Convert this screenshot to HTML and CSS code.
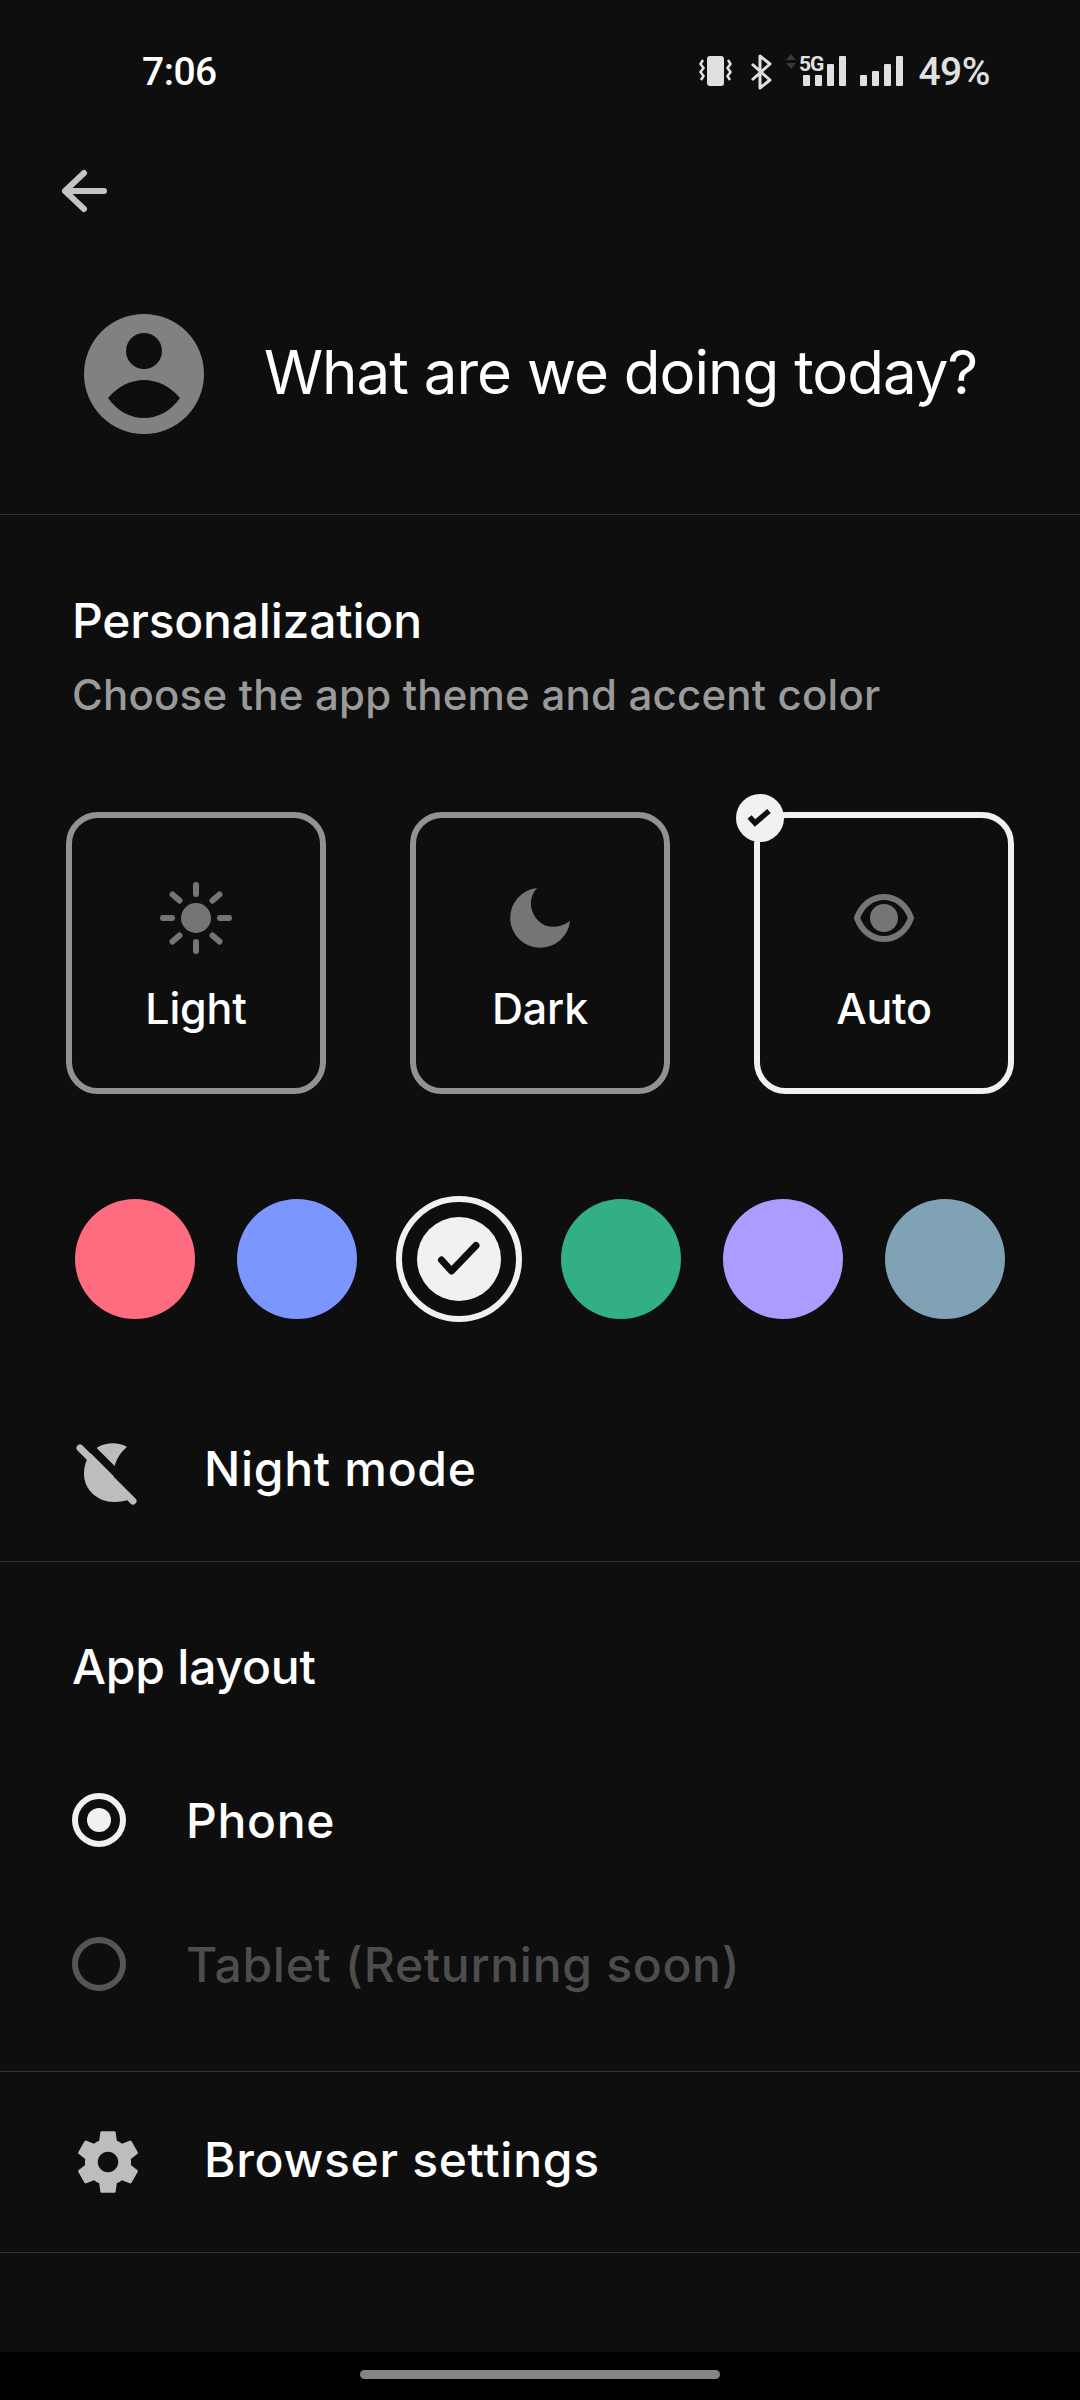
FILE: index.html
```html
<!DOCTYPE html>
<html lang="en">
<head>
  <meta charset="UTF-8">
  <title>Personalization</title>
  <link rel="stylesheet" href="styles.css">
</head>
<body>

<div class="screen">
  <div class="status">
    <span class="time">7:06</span>
    <div class="status-right">
      <svg class="status-icons" width="206" height="44" viewBox="700 50 206 44">
        <rect x="708" y="56" width="17" height="30" rx="3" fill="#e0e0e0"/>
        <path d="M704 60l-2.500 4 3 4-3 4 3 4-2.500 4M729 60l2.500 4-3 4 3 4-3 4 2.500 4" fill="none" stroke="#e0e0e0" stroke-width="2.500"/>
        <path d="M753 64L771 80 761 88V56L771 64 753 80" fill="none" stroke="#e0e0e0" stroke-width="3" stroke-linejoin="round"/>
        <path d="M792 54l5 6h-10zM792 69l5-6h-10z" fill="#3a3a3a"/>
        <rect x="804" y="75" width="7" height="11" rx="1" fill="#e0e0e0"/>
        <rect x="816" y="75" width="7" height="11" rx="1" fill="#e0e0e0"/>
        <rect x="828" y="64" width="7" height="22" rx="1" fill="#e0e0e0"/>
        <rect x="840" y="56" width="7" height="30" rx="1" fill="#e0e0e0"/>
        <rect x="861" y="75" width="7" height="11" rx="1" fill="#e0e0e0"/>
        <rect x="873" y="71" width="7" height="15" rx="1" fill="#e0e0e0"/>
        <rect x="885" y="64" width="7" height="22" rx="1" fill="#e0e0e0"/>
        <rect x="897" y="56" width="7" height="30" rx="1" fill="#e0e0e0"/>
        <text class="net" x="800" y="71">5G</text>
      </svg>
      <span class="battery">49%</span>
    </div>
  </div>

  <div class="back-row">
    <svg width="50" height="50" viewBox="0 0 50 50">
      <path d="M44 25H5M24 7L5 25l19 18" fill="none" stroke="#c4c4c4" stroke-width="6" stroke-linecap="round" stroke-linejoin="round"/>
    </svg>
  </div>

  <div class="header">
    <svg width="120" height="120" viewBox="0 0 120 120">
      <circle cx="60" cy="60" r="60" fill="#808282"/>
      <circle cx="60" cy="37" r="18" fill="#0e0e0e"/>
      <path d="M24 84C34 72 47 66 60 66s26 6 36 18c-9 13-22 20-36 20S33 97 24 84z" fill="#0e0e0e"/>
    </svg>
    <h1>What are we doing today?</h1>
  </div>

  <div class="section personalization">
    <h2>Personalization</h2>
    <p class="subtitle">Choose the app theme and accent color</p>

    <div class="themes">
      <div class="theme">
        <svg width="72" height="72" viewBox="0 0 72 72">
          <circle cx="36" cy="36" r="15" fill="#757575"/>
          <path d="M36 3v9M36 60v9M3 36h9M60 36h9M12.500 12.500l7 6M59.500 12.500l-7 6M12.500 59.500l7-6M59.500 59.500l-7-6" stroke="#757575" stroke-width="6" stroke-linecap="round"/>
        </svg>
        <span>Light</span>
      </div>
      <div class="theme">
        <svg width="72" height="72" viewBox="0 0 72 72">
          <path d="M33 6A30 30 0 1 0 66 39C50 50 36 44 30 33 25 24 26 14 33 6z" fill="#757575"/>
        </svg>
        <span>Dark</span>
      </div>
      <div class="theme theme-selected">
        <div class="theme-badge">
          <svg width="30" height="30" viewBox="0 0 30 30">
            <path d="M4.500 14l5.500 6L24 8" fill="none" stroke="#0e0e0e" stroke-width="5.500"/>
          </svg>
        </div>
        <svg width="72" height="72" viewBox="0 0 72 72">
          <path d="M9 36C14 22 25 15 36 15s22 7 27 21c-5 14-16 21-27 21S14 50 9 36z" fill="none" stroke="#757575" stroke-width="6"/>
          <circle cx="36" cy="36" r="14" fill="#757575"/>
        </svg>
        <span>Auto</span>
      </div>
    </div>

    <div class="swatches">
      <div class="swatch swatch-pink"></div>
      <div class="swatch swatch-blue"></div>
      <div class="swatch swatch-selected">
        <div class="swatch-inner">
          <svg width="44" height="44" viewBox="0 0 44 44">
            <path d="M4.500 23l10 11L39 8.500" fill="none" stroke="#0e0e0e" stroke-width="7" stroke-linecap="round" stroke-linejoin="round"/>
          </svg>
        </div>
      </div>
      <div class="swatch swatch-green"></div>
      <div class="swatch swatch-purple"></div>
      <div class="swatch swatch-slate"></div>
    </div>

    <div class="row night-row">
      <svg width="72" height="72" viewBox="0 0 72 72">
        <path d="M55 13C47 8 35 8 26 13 17 18 12 29 12 40 12 56 26 68 42 68 48 68 54 67 59 65L43 49C39 36 44 22 55 13z" fill="#bdbdbd"/>
        <path d="M14 9L70 65" stroke="#0e0e0e" stroke-width="8"/>
        <path d="M8 14L61 67" stroke="#bdbdbd" stroke-width="7" stroke-linecap="round"/>
      </svg>
      <span>Night mode</span>
    </div>
  </div>

  <div class="section layout">
    <h2>App layout</h2>
    <div class="radio-row">
      <div class="radio radio-on"></div>
      <span>Phone</span>
    </div>
    <div class="radio-row radio-row-disabled">
      <div class="radio"></div>
      <span>Tablet (Returning soon)</span>
    </div>
  </div>

  <div class="row browser-row">
    <svg width="72" height="72" viewBox="0.750 0.750 22.500 22.500">
      <path fill-rule="evenodd" d="M19.140 12.940c.040-.300.060-.610.060-.940 0-.320-.020-.640-.070-.940l2.030-1.580c.180-.140.230-.410.120-.610l-1.920-3.320c-.120-.220-.370-.290-.590-.220l-2.390.960c-.500-.380-1.030-.700-1.620-.940l-.360-2.540c-.040-.240-.240-.410-.480-.410h-3.840c-.240 0-.430.170-.470.410l-.360 2.540c-.590.240-1.130.570-1.620.940l-2.390-.960c-.220-.080-.470 0-.590.220L2.740 8.870c-.120.210-.080.470.120.610l2.030 1.580c-.050.300-.090.630-.090.940s.020.640.07.940l-2.030 1.580c-.180.140-.230.410-.12.610l1.920 3.320c.120.220.370.290.590.220l2.390-.960c.500.380 1.030.700 1.620.940l.360 2.540c.050.240.240.410.480.410h3.840c.240 0 .440-.170.470-.410l.360-2.540c.590-.240 1.130-.560 1.620-.94l2.390.960c.220.080.470 0 .590-.22l1.920-3.320c.120-.220.070-.47-.12-.61l-2.010-1.580zM12 15.200c-1.770 0-3.200-1.430-3.200-3.200s1.430-3.200 3.200-3.200 3.200 1.430 3.200 3.200-1.430 3.200-3.200 3.200z" fill="#bdbdbd"/>
    </svg>
    <span>Browser settings</span>
  </div>

  <div class="nav">
    <div class="nav-pill"></div>
  </div>
</div>

</body>
</html>
```

FILE: styles.css
```css
* {
  box-sizing: border-box;
}
body {
  margin: 0;
  background-color: #0e0e0e;
  color: #fff;
  font-family: Inter, "Noto Sans", sans-serif;
}
svg {
  display: block;
  flex-shrink: 0;
}
h1,
h2,
p {
  margin: 0;
  font-weight: 400;
}
.screen {
  display: flex;
  flex-direction: column;
  width: 1080px;
  height: 2400px;
}
.status {
  display: flex;
  justify-content: space-between;
  align-items: center;
  height: 144px;
  padding: 0 90px 0 142px;
  font-family: Roboto, sans-serif;
}
.time {
  font-size: 39px;
  font-weight: 500;
  letter-spacing: -0.5px;
}
.status-right {
  display: flex;
  align-items: center;
  gap: 13px;
}
.net {
  font-family: Roboto, sans-serif;
  font-size: 21px;
  font-weight: 700;
  letter-spacing: -1px;
  fill: #e0e0e0;
  paint-order: stroke;
  stroke: #0e0e0e;
  stroke-width: 2px;
}
.battery {
  font-size: 39px;
  font-weight: 500;
  letter-spacing: -0.5px;
  color: #e0e0e0;
}
.back-row {
  display: flex;
  align-items: center;
  height: 92px;
  padding: 2px 0 0 60px;
}
.header {
  display: flex;
  align-items: center;
  gap: 60px;
  padding: 78px 0 80px 84px;
  border-bottom: 1px solid #333;
}
.header h1 {
  margin-bottom: 4px;
  font-size: 60px;
  line-height: 116px;
  letter-spacing: -1px;
}
.section {
  padding: 76px 66px 0 72px;
}
.section h2 {
  font-size: 48px;
  font-weight: 500;
  line-height: 60px;
  letter-spacing: -0.2px;
}
.subtitle {
  margin-top: 14px;
  font-size: 42px;
  font-weight: 500;
  line-height: 60px;
  letter-spacing: 0.2px;
  color: #9a9a9a;
}
.themes {
  display: flex;
  gap: 84px;
  margin: 87px 0 0 -6px;
}
.theme {
  position: relative;
  display: flex;
  flex-direction: column;
  align-items: center;
  width: 260px;
  height: 282px;
  padding-top: 64px;
  border: 6px solid #929292;
  border-radius: 32px;
}
.theme span {
  margin-top: 24px;
  font-size: 43px;
  font-weight: 500;
  line-height: 60px;
  letter-spacing: -0.2px;
}
.theme-selected {
  border-color: #f0f1f3;
}
.theme-badge {
  position: absolute;
  top: -24px;
  left: -24px;
  display: flex;
  justify-content: center;
  align-items: center;
  width: 48px;
  height: 48px;
  border-radius: 50%;
  background-color: #f0f1f3;
}
.swatches {
  display: flex;
  align-items: center;
  gap: 36px;
  margin-top: 102px;
}
.swatch {
  width: 120px;
  height: 120px;
  margin: 0 3px;
  border-radius: 50%;
}
.swatch-pink {
  background-color: #ff6b7f;
}
.swatch-blue {
  background-color: #7b96ff;
}
.swatch-green {
  background-color: #33b083;
}
.swatch-purple {
  background-color: #ab9dff;
}
.swatch-slate {
  background-color: #7fa3b5;
}
.swatch-selected {
  display: flex;
  justify-content: center;
  align-items: center;
  width: 126px;
  height: 126px;
  margin: 0;
  border: 6px solid #f0f1f3;
}
.swatch-inner {
  display: flex;
  justify-content: center;
  align-items: center;
  width: 84px;
  height: 84px;
  border-radius: 50%;
  background-color: #f0f1f3;
}
.row {
  display: flex;
  align-items: center;
  gap: 60px;
  font-size: 48px;
  font-weight: 500;
  letter-spacing: 0.7px;
}
.row span {
  margin-bottom: 3px;
}
.night-row {
  height: 96px;
  margin-top: 100px;
}
.personalization {
  padding-bottom: 43px;
  border-bottom: 1px solid #333;
}
.layout {
  padding-top: 75px;
  padding-bottom: 59px;
  border-bottom: 1px solid #333;
}
.radio-row {
  display: flex;
  align-items: center;
  gap: 60px;
  height: 96px;
  margin-top: 48px;
  font-size: 48px;
  font-weight: 500;
  letter-spacing: 0.7px;
}
.layout h2 + .radio-row {
  margin-top: 75px;
}
.radio-row-disabled {
  color: #4d4d4d;
}
.radio {
  display: flex;
  justify-content: center;
  align-items: center;
  width: 54px;
  height: 54px;
  border: 6px solid #555;
  border-radius: 50%;
}
.radio-on {
  border-color: #f0f1f3;
}
.radio-on::after {
  content: "";
  width: 24px;
  height: 24px;
  border-radius: 50%;
  background-color: #f0f1f3;
}
.browser-row {
  height: 181px;
  padding-left: 72px;
  border-bottom: 1px solid #333;
}
.browser-row span {
  margin-bottom: 5px;
}
.nav {
  display: flex;
  justify-content: center;
  height: 48px;
  margin-top: auto;
  padding-top: 18px;
  background-color: #000;
}
.nav-pill {
  width: 360px;
  height: 9px;
  border-radius: 5px;
  background-color: #858585;
}
```
